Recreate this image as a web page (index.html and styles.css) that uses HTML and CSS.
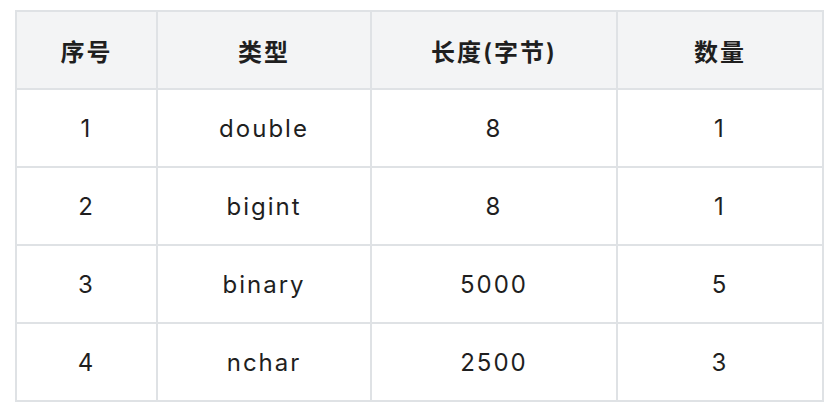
FILE: index.html
```html
<!DOCTYPE html>
<html lang="zh">
<head>
<meta charset="utf-8">
<link rel="stylesheet" href="styles.css">
</head>
<body>
<div class="wrap">
<table class="data">
  <thead>
    <tr>
      <th class="c1">序号</th>
      <th class="c2">类型</th>
      <th class="c3">长度(字节)</th>
      <th class="c4">数量</th>
    </tr>
  </thead>
  <tbody>
    <tr><td>1</td><td>double</td><td>8</td><td>1</td></tr>
    <tr><td>2</td><td>bigint</td><td>8</td><td>1</td></tr>
    <tr><td>3</td><td>binary</td><td>5000</td><td>5</td></tr>
    <tr><td>4</td><td>nchar</td><td>2500</td><td>3</td></tr>
  </tbody>
</table>
</div>
</body>
</html>
```
FILE: styles.css
```css
html, body {
  margin: 0;
  padding: 0;
  background: #ffffff;
}
.wrap {
  padding: 10px 0 0 15px;
}
.data {
  border-collapse: collapse;
  width: 807px;
  table-layout: fixed;
  font-family: Inter, "Noto Sans CJK SC", sans-serif;
  font-size: 24px;
  color: #1f1f1f;
  letter-spacing: 2px;
}
.data th, .data td {
  border: 2px solid #dfe2e5;
  text-align: center;
  height: 78px;
  padding: 0;
  box-sizing: border-box;
}
.data th {
  background: #f3f4f5;
  font-weight: 600;
}
.c1 { width: 141px; }
.c2 { width: 214px; }
.c3 { width: 246px; }
.c4 { width: 206px; }
```
